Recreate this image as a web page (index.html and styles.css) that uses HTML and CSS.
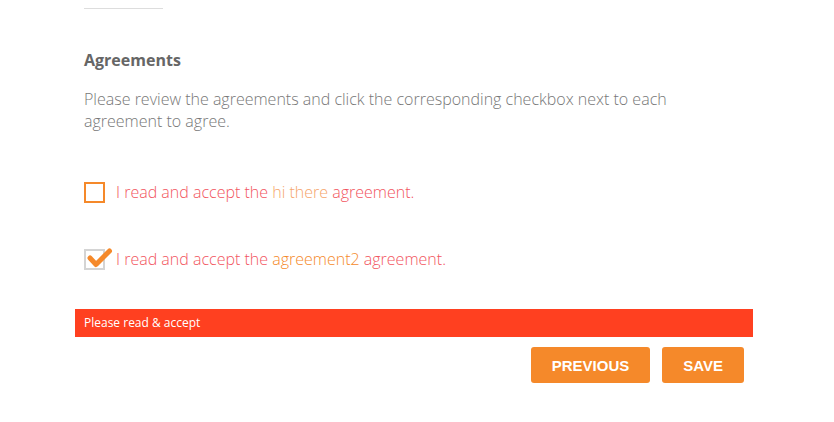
FILE: index.html
```html
<!DOCTYPE html>
<html lang="en">
<head>
    <meta charset="UTF-8">
    <title>Agreements</title>
    <link rel="stylesheet" href="styles.css">
</head>
<body>
    <div class="wrap">
        <div class="section">
            <div class="divider"></div>
            <h3 class="title">Agreements</h3>
            <p class="intro">Please review the agreements and click the corresponding checkbox next to each agreement to agree.</p>

            <label class="agree">
                <input type="checkbox">
                <span class="box"></span>
                <span class="text">I read and accept the <span class="name light">hi there</span> agreement.</span>
            </label>

            <label class="agree">
                <input type="checkbox" checked>
                <span class="box">
                    <svg class="tick" width="21" height="21" viewBox="0 0 21 21">
                        <polyline points="6,9 12,15.5 25.5,2" fill="none" stroke="#f5892a" stroke-width="5" stroke-linecap="round" stroke-linejoin="round"/>
                    </svg>
                </span>
                <span class="text">I read and accept the <span class="name">agreement2</span> agreement.</span>
            </label>
        </div>

        <div class="alert">Please read &amp; accept</div>

        <div class="actions">
            <button class="btn">PREVIOUS</button>
            <button class="btn">SAVE</button>
        </div>
    </div>
</body>
</html>
```

FILE: styles.css
```css
:root {
    --orange: #f5892a;
    --red: #ff4020;
    --label: #f25560;
}
* {
    margin: 0;
    padding: 0;
    box-sizing: border-box;
}
body {
    font-family: 'Open Sans', sans-serif;
    background: #fff;
    color: #777;
}
.wrap {
    width: 678px;
    margin-left: 75px;
}
.section {
    padding: 8px 9px 0;
}
.divider {
    width: 79px;
    height: 1px;
    background: #ddd;
}
.title {
    margin-top: 40px;
    font-size: 16px;
    font-weight: 700;
    line-height: 22px;
    color: #666;
}
.intro {
    margin-top: 17px;
    width: 600px;
    font-size: 16px;
    font-weight: 300;
    line-height: 22px;
    color: #777;
}
.agree {
    display: flex;
    align-items: center;
    gap: 11px;
    margin-top: 49px;
    cursor: pointer;
}
.agree + .agree {
    margin-top: 45px;
}
.agree input {
    display: none;
}
.box {
    position: relative;
    width: 21px;
    height: 21px;
    border: 2px solid var(--orange);
    flex-shrink: 0;
}
.agree input:checked + .box {
    border-color: #d4d4d4;
}
.tick {
    position: absolute;
    left: -2px;
    top: -2px;
    overflow: visible;
}
.text {
    font-size: 16px;
    font-weight: 300;
    line-height: 22px;
    color: var(--label);
}
.name {
    color: var(--orange);
}
.name.light {
    color: #f6a56b;
}
.alert {
    margin-top: 39px;
    height: 28px;
    padding: 0 9px;
    background: var(--red);
    color: #fff;
    font-size: 12px;
    line-height: 28px;
}
.actions {
    display: flex;
    justify-content: flex-end;
    gap: 12px;
    padding: 10px 9px 0;
}
.btn {
    height: 36px;
    padding: 0 21px;
    border: none;
    border-radius: 3px;
    background: var(--orange);
    color: #fff;
    font-family: 'Liberation Sans', Arial, sans-serif;
    font-size: 15px;
    font-weight: 700;
    cursor: pointer;
}
```
